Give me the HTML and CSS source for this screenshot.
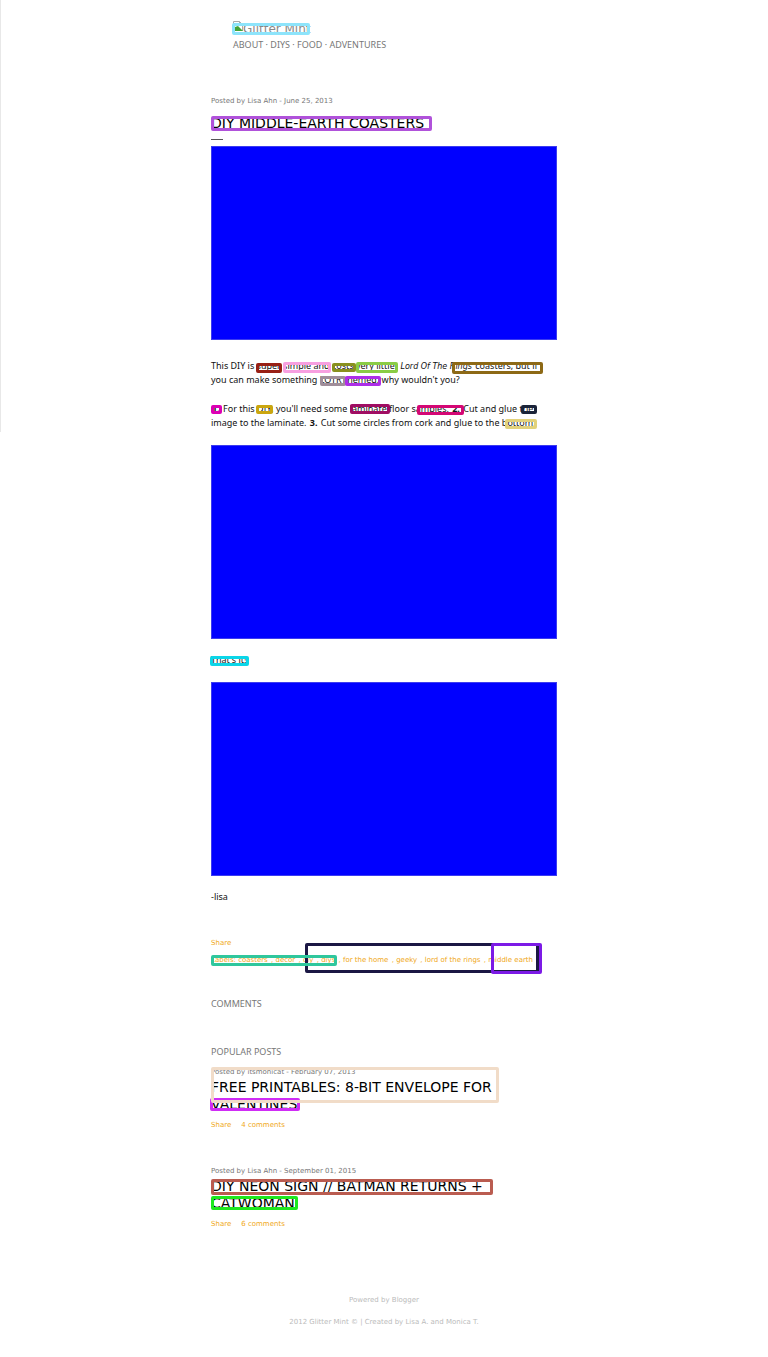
FILE: index.html
```
<!DOCTYPE html>
<html lang="en">
<head>
<meta charset="utf-8">
<title>Glitter Mint</title>
<link rel="stylesheet" href="styles.css">
</head>
<body>
<div class="edge"></div>
<div class="page">
  <header class="header">
    <a class="logo" href="#"><svg class="broken" viewBox="0 0 10 10" aria-hidden="true"><path d="M.5 10V.5h6l3 3V10" fill="#fff" stroke="#aaa"/><path d="M6.500 .5v3h3" fill="none" stroke="#aaa"/><path d="M2 10V6l3-1 5 5z" fill="#43a336"/></svg><span>Glitter Mint</span></a>
    <nav class="nav"><a href="#">ABOUT</a> · <a href="#">DIYS</a> · <a href="#">FOOD</a> · <a href="#">ADVENTURES</a></nav>
  </header>
  <main>
    <article class="post">
      <p class="meta">Posted by Lisa Ahn - June 25, 2013</p>
      <h1 class="title lead"><a href="#">DIY MIDDLE-EARTH COASTERS</a></h1>
      <div class="dash"></div>
      <div class="photo"></div>
      <div class="copy">
        <p>This DIY is super simple and costs very little. <i>Lord Of The Rings</i> coasters, but if<br>you can make something LOTR themed, why wouldn't you?</p>
        <p><b>1.</b> For this DIY, you'll need some laminate floor samples. <b>2.</b> Cut and glue the<br>image to the laminate. <b>3.</b> Cut some circles from cork and glue to the bottom.</p>
      </div>
      <div class="photo"></div>
      <p class="copy short">That's it!</p>
      <div class="photo"></div>
      <p class="copy short">-lisa</p>
      <p class="links share"><a href="#">Share</a></p>
      <p class="links labels">Labels: <a href="#">coasters</a> , <a href="#">decor</a> , <a href="#">diy</a> , <a href="#">diys</a> , <a href="#">for the home</a> , <a href="#">geeky</a> , <a href="#">lord of the rings</a> , <a href="#">middle earth</a></p>
    </article>
    <h2 class="section comments">COMMENTS</h2>
    <h2 class="section">POPULAR POSTS</h2>
    <article class="popular">
      <p class="meta">Posted by itsmonicat - February 07, 2013</p>
      <h3 class="title"><a href="#">FREE PRINTABLES: 8-BIT ENVELOPE FOR VALENTINES</a></h3>
      <p class="links"><a href="#">Share</a><a href="#">4 comments</a></p>
    </article>
    <article class="popular">
      <p class="meta">Posted by Lisa Ahn - September 01, 2015</p>
      <h3 class="title"><a href="#">DIY NEON SIGN // BATMAN RETURNS + CATWOMAN</a></h3>
      <p class="links"><a href="#">Share</a><a href="#">6 comments</a></p>
    </article>
  </main>
  <footer class="footer">
    <p>Powered by Blogger</p>
    <p>2012 Glitter Mint © | Created by Lisa A. and Monica T.</p>
  </footer>
  <div class="marks" aria-hidden="true">
    <span class="mark m-logo"></span>
    <span class="mark m-title"></span>
    <span class="mark m-super"></span>
    <span class="mark m-simple"></span>
    <span class="mark m-costs"></span>
    <span class="mark m-very"></span>
    <span class="mark m-rings"></span>
    <span class="mark m-lotr"></span>
    <span class="mark m-themed"></span>
    <span class="mark m-one"></span>
    <span class="mark m-diy"></span>
    <span class="mark m-laminate"></span>
    <span class="mark m-samples"></span>
    <span class="mark m-the"></span>
    <span class="mark m-bottom"></span>
    <span class="mark m-thats"></span>
    <span class="mark m-tags"></span>
    <span class="mark m-labels"></span>
    <span class="mark m-middle"></span>
    <span class="mark m-valentines"></span>
    <span class="mark m-free"></span>
    <span class="mark m-neon"></span>
    <span class="mark m-catwoman"></span>
  </div>
</div>
</body>
</html>
```
FILE: styles.css
```
* { box-sizing: border-box; }
body { margin: 0; background: #fff; color: #111; font-family: "DejaVu Sans", sans-serif; font-size: 8px; }
h1, h2, h3, p { margin: 0; font-weight: 400; }
a { color: inherit; text-decoration: none; }

.edge { position: absolute; left: 0; top: 0; width: 1px; height: 432px; background: #e8e8e8; }
.page { position: relative; max-width: 346px; margin: 0 auto; padding: 21px 0 28px; }

.header { padding-left: 22px; color: #777; }
.logo { display: flex; height: 17px; overflow: hidden; font-size: 12px; line-height: 16px; color: #888; }
.broken { width: 10px; height: 10px; }
.nav { font-family: "Noto Sans", sans-serif; font-size: 9px; line-height: 14px; white-space: nowrap; }

.meta { font-size: 7px; line-height: 12px; color: #777; }
.post { padding-top: 43px; }
.title { font-size: 14px; line-height: 16px; color: #000; }
.lead { margin-top: 8px; }
.dash { width: 12px; height: 1px; margin: 8px 0 6px; background: #555; }
.photo { height: 194px; background: #00f; border: 1px solid #3c3cf0; }

.copy { font-family: "Noto Sans", sans-serif; font-size: 9px; line-height: 14px; white-space: nowrap; }
.copy b, .copy i { padding: 0 1px; }
.copy i { font-family: "DejaVu Sans", sans-serif; font-size: 8px; line-height: 8px; }
div.copy { display: grid; gap: 15px; padding: 19px 0 15px; }
.short { padding: 14px 0 15px; }

.links { display: flex; gap: 10px; font-size: 7px; line-height: 12px; color: #f0a818; }
.share { margin-top: 18px; }
.labels { display: block; margin-top: 5px; white-space: nowrap; }
.labels a { padding-right: 1px; }

.section { font-family: "Noto Sans", sans-serif; font-size: 9px; line-height: 12px; color: #777; }
.comments { margin: 32px 0 36px; }
.popular { padding: 8px 0 26px; }
.popular .title { margin: 1px 0 6px; line-height: 17px; }

.footer { display: grid; gap: 10px; margin-top: 38px; font-size: 7px; line-height: 12px; text-align: center; color: #bbb; }

.mark { position: absolute; border: 3px solid; border-radius: 2px; }
.m-logo { left: 21px; top: 23px; width: 78px; height: 12px; color: #8de4fb; }
.m-title { left: 0; top: 116px; width: 221px; height: 15px; color: #b052da; }
.m-super { left: 45px; top: 363px; width: 26px; height: 10px; color: #982015; }
.m-simple { left: 72px; top: 362px; width: 48px; height: 11px; color: #f79fe0; }
.m-costs { left: 121px; top: 363px; width: 24px; height: 9px; color: #89901e; }
.m-very { left: 145px; top: 362px; width: 42px; height: 11px; color: #8acc45; }
.m-rings { left: 241px; top: 362px; width: 91px; height: 12px; color: #8d6916; }
.m-lotr { left: 109px; top: 376px; width: 26px; height: 10px; color: #a08e9a; }
.m-themed { left: 134px; top: 376px; width: 36px; height: 10px; color: #ad2ee8; }
.m-one { left: 0; top: 405px; width: 11px; height: 9px; color: #dc00b4; }
.m-diy { left: 45px; top: 405px; width: 17px; height: 9px; color: #cba60f; }
.m-laminate { left: 139px; top: 404px; width: 40px; height: 10px; color: #a00d63; }
.m-samples { left: 206px; top: 405px; width: 47px; height: 10px; color: #d40775; }
.m-the { left: 310px; top: 405px; width: 16px; height: 9px; color: #1b2439; }
.m-bottom { left: 294px; top: 419px; width: 32px; height: 10px; color: #e2d27b; }
.m-thats { left: -1px; top: 656px; width: 39px; height: 10px; color: #0bd6e8; }
.m-labels { left: 0; top: 955px; width: 126px; height: 11px; color: #2fc79d; }
.m-tags { left: 94px; top: 943px; width: 234px; height: 30px; color: #1b1744; }
.m-middle { left: 280px; top: 943px; width: 51px; height: 31px; color: #7c1ae6; }
.m-free { left: 0; top: 1067px; width: 288px; height: 36px; color: #f1dcc8; }
.m-valentines { left: -1px; top: 1098px; width: 90px; height: 13px; color: #cf2df5; }
.m-neon { left: 0; top: 1179px; width: 282px; height: 16px; color: #ba5c50; }
.m-catwoman { left: 0; top: 1196px; width: 87px; height: 14px; color: #1ee81e; }
```
